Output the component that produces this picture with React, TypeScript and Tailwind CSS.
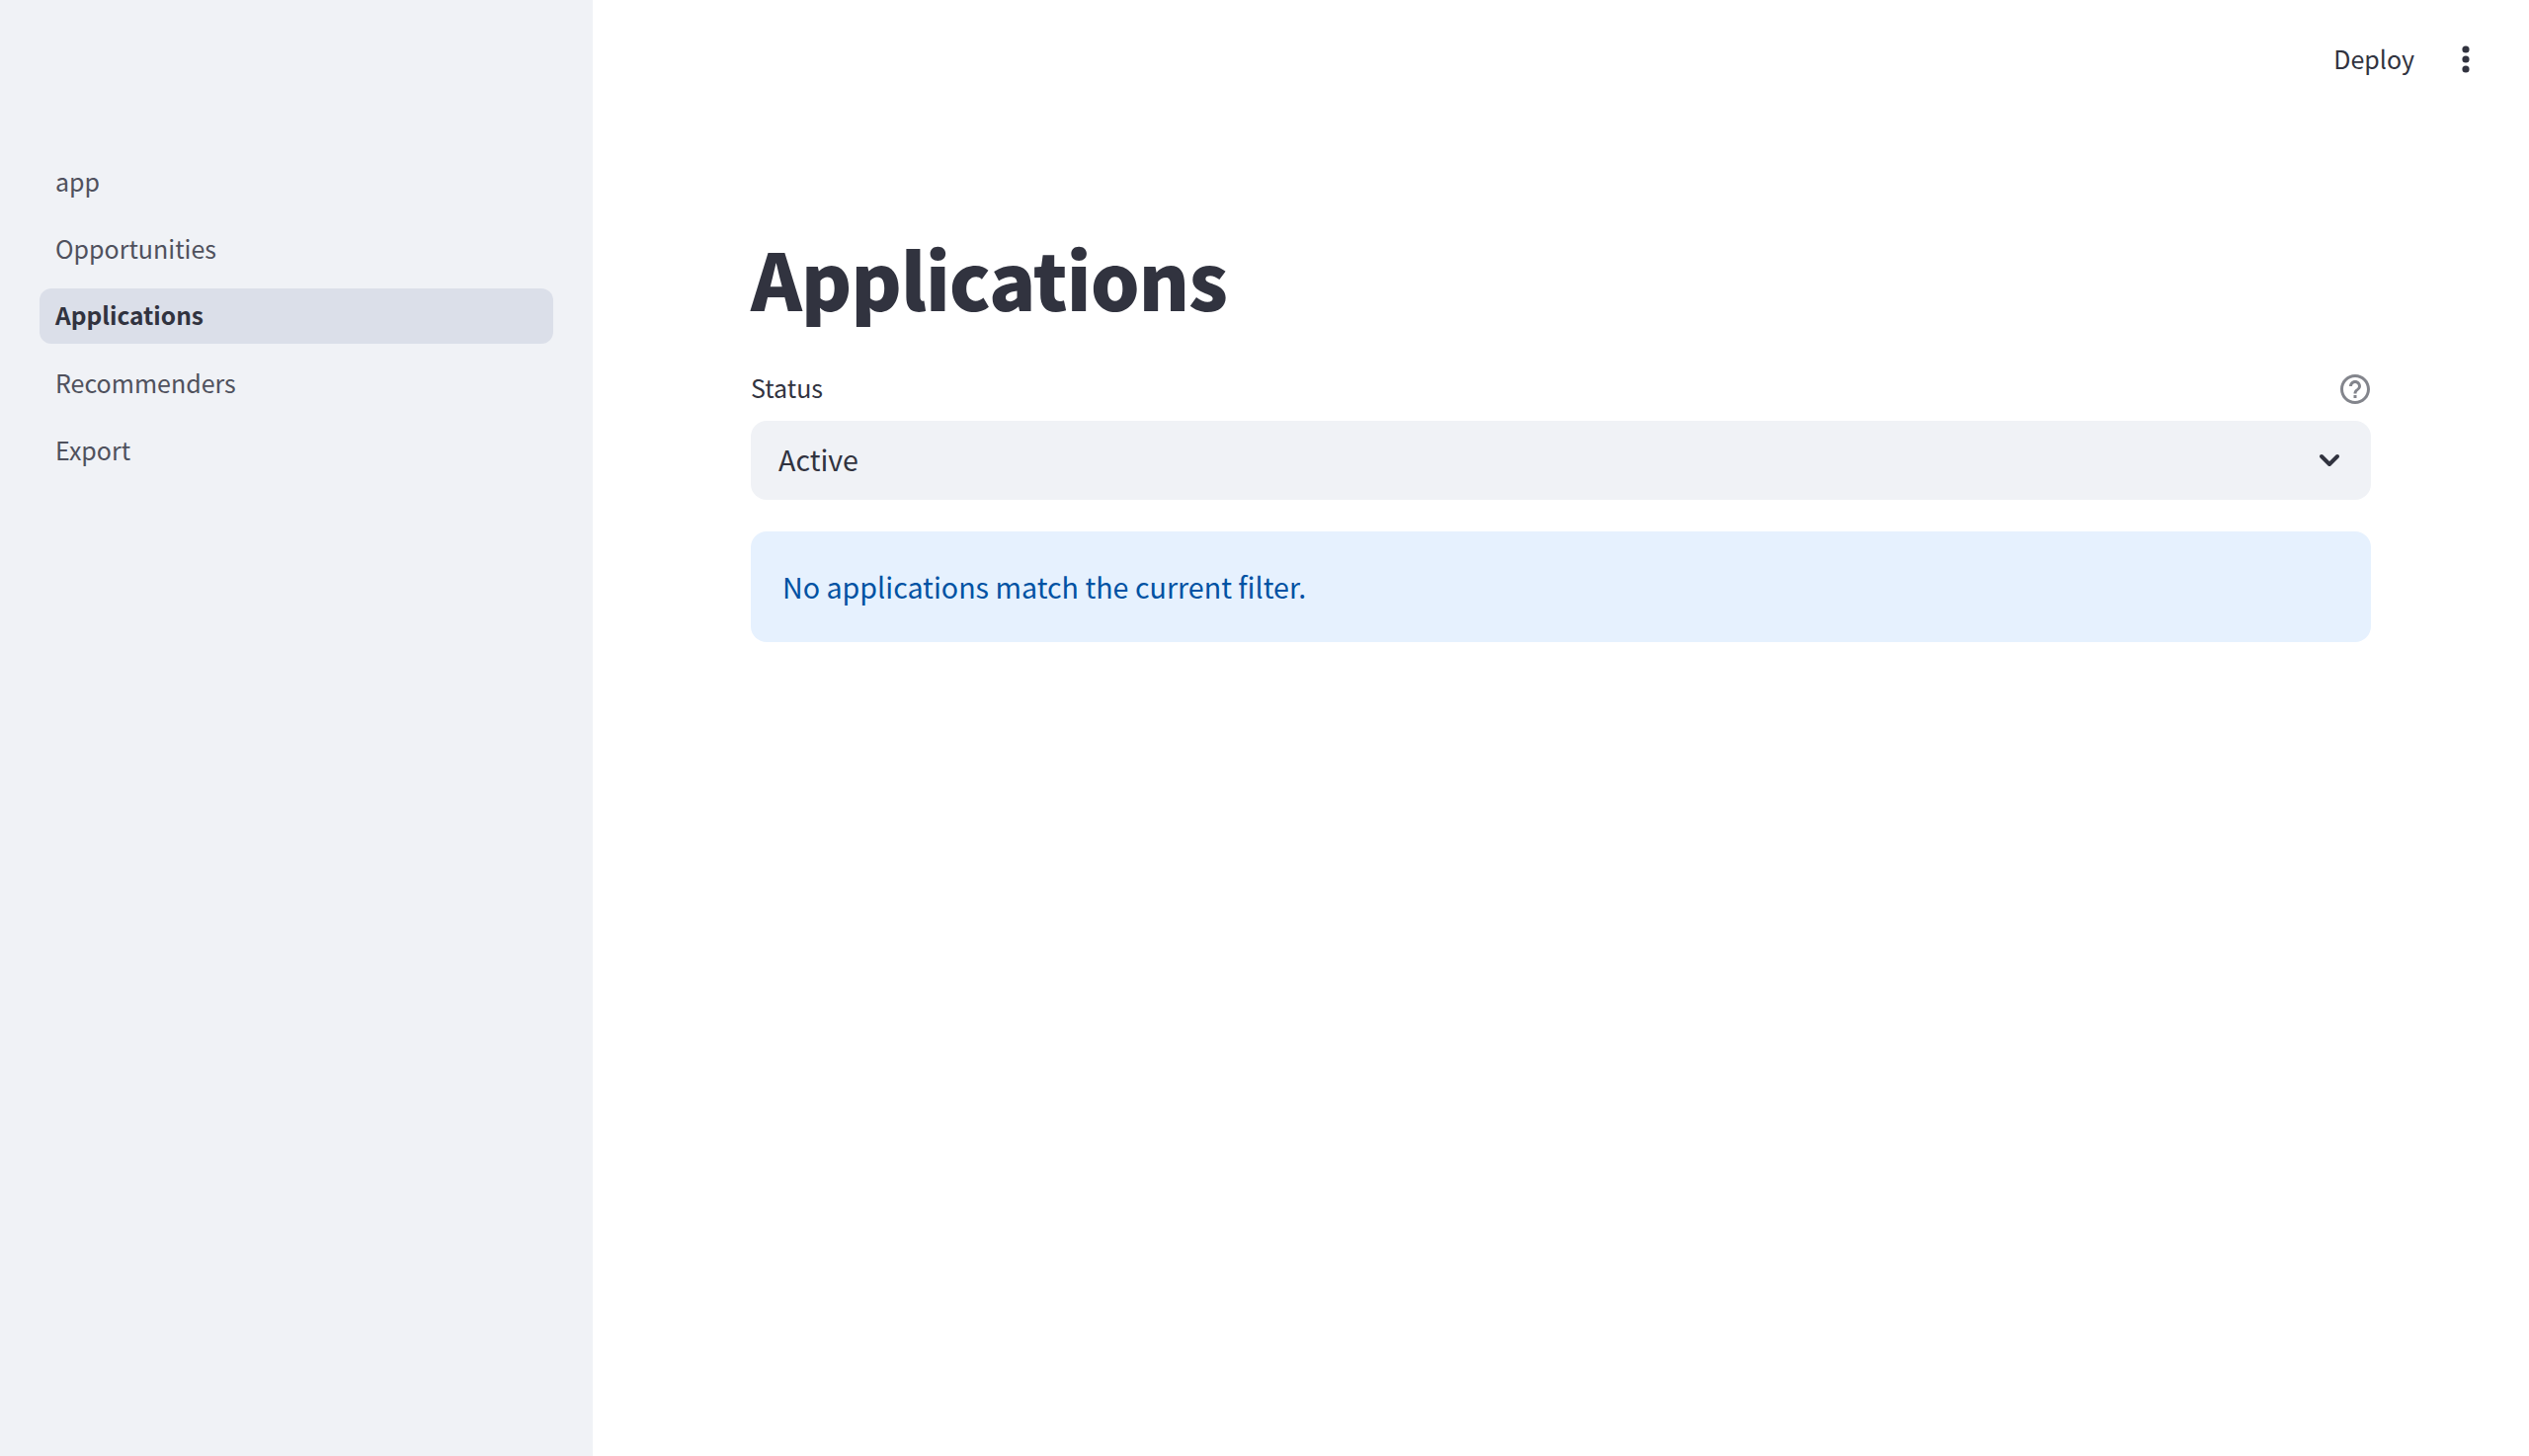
const pages = ["app", "Opportunities", "Applications", "Recommenders", "Export"];

const fontStack = "font-['Noto_Sans_CJK_JP','Noto_Sans',sans-serif]";

function Sidebar() {
  return (
    <aside className="flex w-[600px] shrink-0 flex-col bg-[#f0f2f6] px-10 pt-[156px]">
      <nav className="flex flex-col gap-3">
        {pages.map((page) =>
          page === "Applications" ? (
            <a
              key={page}
              className="flex h-14 items-center rounded-xl bg-[#dbdfe9] px-4 pb-[3px] text-[24.5px] leading-[52px] font-bold text-[#31333f]"
            >
              {page}
            </a>
          ) : (
            <a
              key={page}
              className="flex h-14 items-center rounded-xl px-4 pb-[3px] text-[25px] leading-[52px] text-[#4f515d]"
            >
              {page}
            </a>
          ),
        )}
      </nav>
    </aside>
  );
}

function Toolbar() {
  return (
    <header className="flex h-[120px] shrink-0 items-center justify-end gap-[44px] pr-[56px]">
      <span className="pb-[3px] text-[25px] leading-[40px] text-[#31333f]">Deploy</span>
      <svg width="16" height="36" viewBox="0 0 16 36" fill="#31333f">
        <circle cx="8" cy="8" r="3.6" />
        <circle cx="8" cy="18" r="3.6" />
        <circle cx="8" cy="28" r="3.6" />
      </svg>
    </header>
  );
}

export default function App() {
  return (
    <div className={`flex h-screen w-full overflow-hidden bg-white ${fontStack}`}>
      <Sidebar />
      <main className="flex min-w-0 flex-1 flex-col">
        <Toolbar />
        <section className="flex flex-col px-40 pt-[101px]">
          <h1 className="text-[78.6px] leading-[120px] font-black tracking-[-1.15px] text-[#31333f]">Applications</h1>
          <div className="mt-[31px] flex h-[54px] items-start justify-between">
            <label className="text-[25px] leading-[40px] text-[#31333f]">Status</label>
            <svg width="36" height="36" viewBox="0 0 24 24" fill="#83858c" className="-mr-[2px] mt-[4px]">
              <path d="M11 18h2v-2h-2v2zm1-16C6.48 2 2 6.48 2 12s4.48 10 10 10 10-4.48 10-10S17.52 2 12 2zm0 18c-4.41 0-8-3.59-8-8s3.59-8 8-8 8 3.59 8 8-3.59 8-8 8zm0-14c-2.21 0-4 1.79-4 4h2c0-1.1.9-2 2-2s2 .9 2 2c0 2-3 1.75-3 5h2c0-2.25 3-2.5 3-5 0-2.21-1.79-4-4-4z" />
            </svg>
          </div>
          <div className="flex h-20 items-center justify-between rounded-2xl bg-[#f0f2f6] pr-[30px] pl-7">
            <span className="pb-[2px] text-[28.6px] leading-[44px] text-[#31333f]">Active</span>
            <svg width="24" height="24" viewBox="0 0 24 24" fill="none" stroke="#31333f" strokeWidth="4" strokeLinecap="round" strokeLinejoin="round">
              <polyline points="4,8 12,16 20,8" />
            </svg>
          </div>
          <div className="mt-8 flex h-28 items-center rounded-2xl bg-[#e6f1fe] px-8">
            <p className="text-[28.65px] leading-[44px] text-[#0052a3]">No applications match the current filter.</p>
          </div>
        </section>
      </main>
    </div>
  );
}
